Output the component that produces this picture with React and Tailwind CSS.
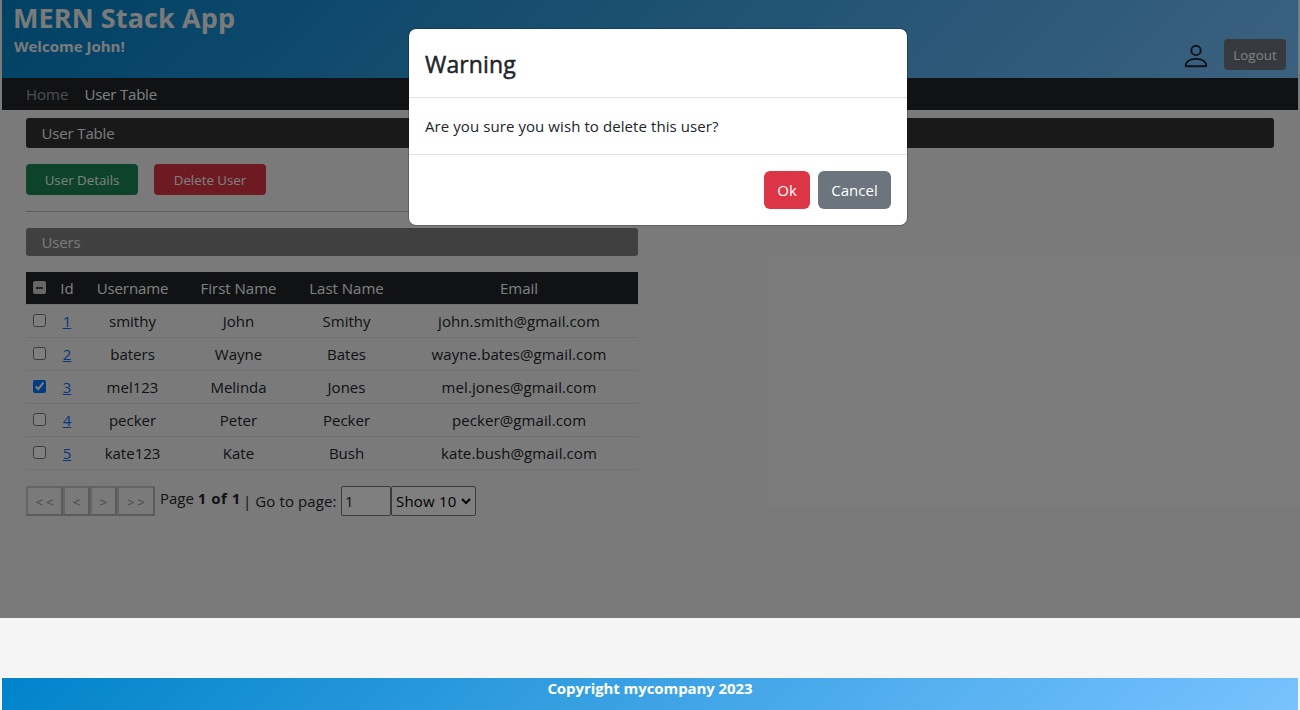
import React from "react";
import { BsPerson } from "react-icons/bs";

const users = [
  { id: 1, username: "smithy", first: "John", last: "Smithy", email: "john.smith@gmail.com" },
  { id: 2, username: "baters", first: "Wayne", last: "Bates", email: "wayne.bates@gmail.com" },
  { id: 3, username: "mel123", first: "Melinda", last: "Jones", email: "mel.jones@gmail.com", selected: true },
  { id: 4, username: "pecker", first: "Peter", last: "Pecker", email: "pecker@gmail.com" },
  { id: 5, username: "kate123", first: "Kate", last: "Bush", email: "kate.bush@gmail.com" },
];

const columns = "grid grid-cols-[27px_28px_103px_108px_108px_238px] text-center";

function Header() {
  return (
    <header className="flex h-[78px] justify-between bg-[linear-gradient(135deg,#0083ca,#78c2ff)] px-3 text-[#f5f5f5]">
      <div>
        <h1 className="-ml-px h-9 text-[27px] leading-9 font-bold tracking-[0.1px]">MERN Stack App</h1>
        <p className="text-[15px] leading-[21px] font-bold">Welcome John!</p>
      </div>
      <div className="mt-[39px] flex h-[31px] gap-[13px]">
        <BsPerson className="mt-[2px] h-[30px] w-[30px] text-[#212529]" />
        <button className="h-[31px] w-[62px] rounded bg-[#6c757d] pt-[2px] text-[13.3px] tracking-[0.1px] text-white">Logout</button>
      </div>
    </header>
  );
}

function NavBar() {
  return (
    <nav className="flex h-8 gap-4 bg-[#212529] pl-6 text-[15px] leading-8">
      <a className="text-white/55">Home</a>
      <a className="tracking-[-0.2px] text-white">User Table</a>
    </nav>
  );
}

function HeaderCheckbox() {
  return (
    <span className="mt-[9px] ml-[7px] h-[13px] w-[13px] rounded-[2px] bg-[#cfcfcf] p-[3px]">
      <span className="mt-[2.5px] block h-[2px] bg-[#4a4a4a]" />
    </span>
  );
}

function RowCheckbox({ checked }) {
  return (
    <input
      type="checkbox"
      readOnly
      checked={!!checked}
      className="mt-[9px] ml-[7px] h-[13px] w-[13px]"
    />
  );
}

function UserTable() {
  return (
    <div className="w-[612px] text-[15px] leading-8 text-[#212529]">
      <div className={`${columns} h-[33px] border-b border-[#dee2e6] bg-[#212529] bg-clip-padding text-white`}>
        <HeaderCheckbox />
        <span>Id</span>
        <span className="tracking-[-0.1px]">Username</span>
        <span className="pl-px">First Name</span>
        <span className="pl-px">Last Name</span>
        <span>Email</span>
      </div>
      {users.map((u) => (
        <div key={u.id} className={`${columns} h-[33px] border-b border-[#dee2e6]`}>
          <RowCheckbox checked={u.selected} />
          <a className="text-[#0d6efd] underline">{u.id}</a>
          <span>{u.username}</span>
          <span className="pl-px">{u.first}</span>
          <span className="pl-px">{u.last}</span>
          <span className="tracking-[0.1px]">{u.email}</span>
        </div>
      ))}
    </div>
  );
}

const pagerButton = "h-[30px] border-2 border-[#cbcbcb] border-r-[#b6b6b6] border-b-[#b6b6b6] pt-[3px] text-[13px] leading-none text-[#909090]";

function Pager() {
  return (
    <div className="mt-4 flex h-[30px] text-[15px] text-[#212529]">
      <button className={`${pagerButton} w-[37px] pl-[3px] tracking-[3px]`}>&lt;&lt;</button>
      <button className={`${pagerButton} w-[27px]`}>&lt;</button>
      <button className={`${pagerButton} w-[27px]`}>&gt;</button>
      <button className={`${pagerButton} w-[38px] pl-[3px] tracking-[3px]`}>&gt;&gt;</button>
      <span className="ml-[5px] w-[83px] leading-[24px] whitespace-nowrap">
        Page <strong className="font-bold tracking-[0.5px]">1 of 1</strong>
      </span>
      <span className="w-[98px] leading-[30px] tracking-[0.1px] whitespace-nowrap">| Go to page:</span>
      <span className="w-[50px] rounded-[2px] border border-[#767676] bg-white pl-[3px] leading-[28px]">1</span>
      <span className="flex w-[85px] items-center rounded-[2px] border border-[#767676] bg-white pl-1 leading-[28px] whitespace-nowrap text-black">
        <span className="w-[65px] tracking-[0.2px]">Show 10</span>
        <svg viewBox="0 0 10 7" className="h-[7px] w-[10px]" fill="none" stroke="currentColor" strokeWidth="2">
          <path d="M1 1l4 4 4-4" />
        </svg>
      </span>
    </div>
  );
}

function WarningDialog() {
  return (
    <div role="dialog" className="absolute top-[28px] left-[408px] w-[500px] rounded-lg border border-black/20 bg-white bg-clip-padding text-[#212529]">
      <div className="h-[69px] border-b border-[#dee2e6] p-4">
        <h4 className="pt-px text-[23px] leading-9 tracking-[0.15px] [-webkit-text-stroke:0.5px_#212529]">Warning</h4>
      </div>
      <div className="h-14 p-4 text-[15px] leading-6 tracking-[0.08px]">Are you sure you wish to delete this user?</div>
      <div className="flex h-[71px] justify-end gap-2 border-t border-[#dee2e6] p-4 text-[15px] text-white">
        <button className="h-[38px] w-[46px] rounded-md bg-[#dc3545]">Ok</button>
        <button className="h-[38px] w-[73px] rounded-md bg-[#6c757d]">Cancel</button>
      </div>
    </div>
  );
}

export default function App() {
  return (
    <div className="relative flex h-[710px] w-[1300px] flex-col overflow-hidden bg-[#f5f5f5] px-[2px] font-['Open_Sans','Noto_Sans',sans-serif]">
      <Header />
      <NavBar />
      <main className="flex-1 px-6 pt-2">
        <div className="h-[30px] rounded-[3px] bg-[#333] pl-[15.5px] text-[15px] leading-[30px] tracking-[-0.15px] text-[#f5f5f5]">User Table</div>
        <div className="mt-4 flex gap-4 text-[13.3px] text-white">
          <button className="h-[31px] w-28 rounded bg-[#198754] pt-[2px]">User Details</button>
          <button className="h-[31px] w-28 rounded bg-[#dc3545] pt-[2px]">Delete User</button>
        </div>
        <hr className="mt-4 w-[612px] border-t border-[#b9babb]" />
        <div className="mt-4 h-7 w-[612px] rounded-[3px] bg-[#808080] pl-[15.5px] text-[15px] leading-[29px] tracking-[-0.15px] text-[#f5f5f5]">Users</div>
        <div className="mt-4">
          <UserTable />
        </div>
        <Pager />
      </main>
      <footer className="h-8 bg-[linear-gradient(135deg,#0083ca,#78c2ff)] text-center text-[15px] leading-[21px] font-bold tracking-[-0.08px] text-white">
        Copyright mycompany 2023
      </footer>
      <div className="absolute top-0 left-0 h-[618px] w-full bg-black/50" />
      <WarningDialog />
    </div>
  );
}
